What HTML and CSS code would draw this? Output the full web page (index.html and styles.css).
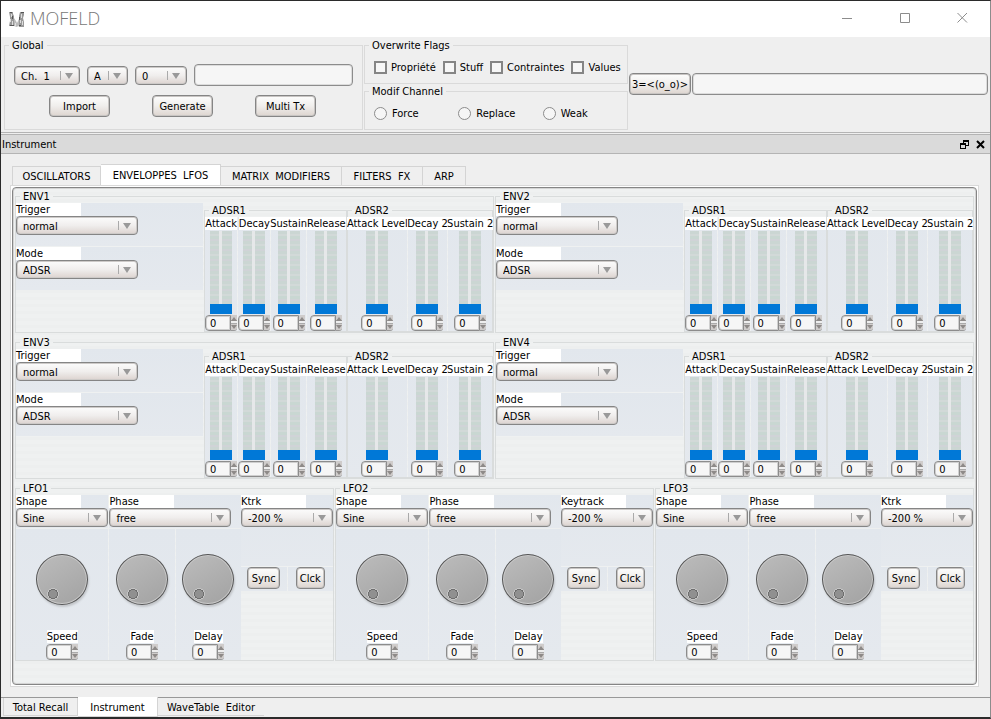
FILE: index.html
```html
<!DOCTYPE html>
<html lang="en">
<head>
<meta charset="utf-8">
<title>MOFELD</title>
<link rel="stylesheet" href="styles.css">
</head>
<body>
<header class="titlebar">
  <svg class="logo" viewBox="0 0 15 15" aria-hidden="true">
    <path d="M0 0h4v2l1 2v3l1 2v3l-1 2H0l1-5V5zM11 0h4v3l-1 3 1 4v5h-5l-1-3 1-4V4z" fill="#999"/>
    <path d="M5 6l2 3 1 2 2-4v6l-2 2-3-1z" fill="#bbb"/>
    <path d="M2.500 2v3M3.500 9v4M12.500 2v4M13.500 9v4M6.500 11v3M1.500 7v3M11.500 8v3" stroke="#dedede" fill="none"/>
    <path d="M1 13.500h4M10 13.500h2M3.500 4v3M10.500 5v3M1 .5h2M12 .5h3" stroke="#555" fill="none"/>
  </svg>
  <h1>MOFELD</h1>
  <div class="window-buttons">
    <button aria-label="Minimize"><svg viewBox="0 0 11 11"><path d="M0 6.500h10"/></svg></button>
    <button aria-label="Maximize"><svg viewBox="0 0 11 11"><path d="M.5 1.500h9v9h-9z"/></svg></button>
    <button aria-label="Close"><svg viewBox="0 0 11 11"><path d="M.5 1l9.500 9.500M10 1L.5 10.500"/></svg></button>
  </div>
</header>

<section class="toolbar">
  <fieldset class="group global">
    <legend>Global</legend>
    <div class="global-fields">
      <span class="combo channel"><select aria-label="Channel"><option>Ch.&nbsp; 1</option></select></span>
      <span class="combo bank"><select aria-label="Bank"><option>A</option></select></span>
      <span class="combo number"><select aria-label="Number"><option>0</option></select></span>
      <input class="field" type="text" aria-label="Name">
    </div>
    <div class="global-actions">
      <button class="btn">Import</button>
      <button class="btn">Generate</button>
      <button class="btn">Multi Tx</button>
    </div>
  </fieldset>
  <div class="options">
    <fieldset class="group">
      <legend>Overwrite Flags</legend>
      <div class="flags">
        <label><input type="checkbox">Propriété</label>
        <label><input type="checkbox">Stuff</label>
        <label><input type="checkbox">Contraintes</label>
        <label><input type="checkbox">Values</label>
      </div>
    </fieldset>
    <fieldset class="group">
      <legend>Modif Channel</legend>
      <div class="modes">
        <label><input type="radio" name="modif">Force</label>
        <label><input type="radio" name="modif">Replace</label>
        <label><input type="radio" name="modif">Weak</label>
      </div>
    </fieldset>
  </div>
  <div class="message">
    <button class="btn face">3=&lt;(o_o)&gt;</button>
    <input class="field" type="text" aria-label="Message">
  </div>
</section>

<div class="dock-title">
  <h2>Instrument</h2>
  <button aria-label="Float"><svg viewBox="0 0 9 9"><path d="M3 .5h6M3 1.500h6M3.500 0v3M8.500 0v6M6 5.500h3M0 4.500h6M.5 3v6M5.500 3v6M0 8.500h6M0 3.500h6"/></svg></button>
  <button aria-label="Close dock"><svg viewBox="0 0 9 9"><path class="heavy" d="M1 1l7 7M8 1l-7 7"/></svg></button>
</div>

<main>
  <nav class="tabs">
    <button class="tab-osc">OSCILLATORS</button>
    <button class="tab-env active">ENVELOPPES&nbsp; LFOS</button>
    <button class="tab-mod">MATRIX&nbsp; MODIFIERS</button>
    <button class="tab-fx">FILTERS&nbsp; FX</button>
    <button class="tab-arp">ARP</button>
  </nav>
  <div class="pane">
    <div class="pane-inner">
      <div class="envelopes" id="envelopes"></div>
      <div class="lfos" id="lfos"></div>
    </div>
  </div>
</main>

<nav class="bottom-tabs">
  <button class="tab-recall">Total Recall</button>
  <button class="tab-instrument active">Instrument</button>
  <button class="tab-wave">WaveTable&nbsp; Editor</button>
</nav>
<script src="panels.js"></script>
</body>
</html>
```
FILE: panels.js
```js
const combo = (id, label, value, size) => `
  <div class="labelled">
    <label for="${id}">${label}</label>
    <span class="combo ${size}"><select id="${id}"><option>${value}</option></select></span>
  </div>`;

const spin = (label) => `
  <span class="spin">
    <input type="number" value="0" aria-label="${label} value">
    <span class="steps"><button aria-label="Increase"></button><button aria-label="Decrease"></button></span>
  </span>`;

const fader = (id, label) => `
  <div class="fader cell">
    <label for="${id}">${label}</label>
    <input id="${id}" type="range" min="0" max="127" value="0">
    ${spin(label)}
  </div>`;

const faders = (prefix, title, names) => `
  <fieldset class="${title.toLowerCase()}">
    <legend>${title}</legend>
    <div class="faders">${names.map((n, i) => fader(`${prefix}-${title}-${i}`, n)).join("")}</div>
  </fieldset>`;

const envelope = (n) => `
  <fieldset>
    <legend>ENV${n}</legend>
    <div class="envelope">
      <div class="envelope-modes">
        <div class="cell">${combo(`trigger${n}`, "Trigger", "normal", "wide")}</div>
        <div class="cell">${combo(`mode${n}`, "Mode", "ADSR", "wide")}</div>
      </div>
      ${faders(`env${n}`, "ADSR1", ["Attack", "Decay", "Sustain", "Release"])}
      ${faders(`env${n}`, "ADSR2", ["Attack Level", "Decay 2", "Sustain 2"])}
    </div>
  </fieldset>`;

const knob = (id, label) => `
  <div class="knob cell">
    <input id="${id}" type="range" min="0" max="127" value="0">
    <label for="${id}">${label}</label>
    ${spin(label)}
  </div>`;

const lfo = (n, track) => `
  <fieldset>
    <legend>LFO${n}</legend>
    <div class="lfo">
      <div class="lfo-main">
        <div class="cell">${combo(`shape${n}`, "Shape", "Sine", "narrow")}</div>
        <div class="cell phase">${combo(`phase${n}`, "Phase", "free", "wide")}</div>
        ${knob(`speed${n}`, "Speed")}
        ${knob(`fade${n}`, "Fade")}
        ${knob(`delay${n}`, "Delay")}
      </div>
      <div class="lfo-side">
        <div class="cell track">${combo(`track${n}`, track, "-200 %", "narrow")}</div>
        <div class="cell"><button class="btn sync">Sync</button></div>
        <div class="cell"><button class="btn clock">Clck</button></div>
      </div>
    </div>
  </fieldset>`;

document.getElementById("envelopes").innerHTML = [1, 2, 3, 4].map(envelope).join("");
document.getElementById("lfos").innerHTML =
  ["Ktrk", "Keytrack", "Ktrk"].map((track, i) => lfo(i + 1, track)).join("");
```
FILE: styles.css
```css
* { box-sizing: border-box; }

body {
  margin: 0;
  min-height: 100vh;
  display: flex;
  flex-direction: column;
  border: 1px solid #2b2b2b;
  border-right-color: #8c8c8c;
  border-bottom-width: 2px;
  background: #efefef;
  color: #000;
  font: 11px/13px "DejaVu Sans Condensed", "DejaVu Sans", sans-serif;
  white-space: nowrap;
}

button, input, select { font: inherit; color: inherit; margin: 0; }
button { padding: 0; border: 0; background: none; }
h1, h2 { margin: 0; font-weight: normal; }
h2 { font-size: 11px; }

/* Title bar */
.titlebar {
  display: flex;
  align-items: center;
  height: 36px;
  padding-left: 8px;
  background: #fff;
}
.logo { width: 15px; height: 15px; }
h1 {
  flex: 1;
  padding: 0 0 2px 6px;
  font: 300 18px/24px "Open Sans", sans-serif;
  color: #777;
}
.window-buttons { display: flex; }
.window-buttons button { width: 58px; height: 30px; }
.window-buttons button:last-child { width: 56px; }
.window-buttons svg { width: 11px; height: 11px; stroke: #8c8c8c; fill: none; }

/* Shared controls */
fieldset {
  min-width: 0;
  margin: 0;
  padding: 0;
  border: 1px solid #d9dcdc;
}
legend { margin-left: 4px; padding: 2px 3px 0; line-height: 12px; }

.btn {
  height: 22px;
  padding-top: 1px;
  border: 1px solid #858585;
  border-radius: 4px;
  box-shadow: inset 0 0 0 1px #c8c5c3;
  background: linear-gradient(#fdfdfd, #f0eeec 50%, #ddd5cf);
  text-align: center;
}

.field {
  height: 22px;
  min-width: 0;
  border: 1px solid #8c8c8c;
  border-radius: 4px;
  box-shadow: inset 0 0 0 1px #dcdcdc;
  background: #f6f6f6;
}

.combo { position: relative; display: block; }
.combo select {
  display: block;
  width: 100%;
  height: 19px;
  padding: 2px 20px 0 6px;
  appearance: none;
  border: 1px solid #858585;
  border-radius: 4px;
  box-shadow: inset 0 0 0 1px #cdcac8;
  background: linear-gradient(#fcfcfc, #f0eeed 50%, #dcd3cf);
}
.combo::before {
  content: "";
  position: absolute;
  right: 19px;
  top: 5px;
  width: 1px;
  height: 9px;
  background: #aaa;
}
.combo::after {
  content: "";
  position: absolute;
  right: 7px;
  top: 7px;
  border: solid transparent;
  border-width: 6px 4px 0;
  border-top-color: #999;
}
.wide { width: 122px; }
.narrow { width: 92px; }

/* Toolbar */
.toolbar {
  display: grid;
  grid-template-columns: 359px 264px 1fr;
  gap: 1px;
  padding: 1px 2px 2px 3px;
  border-bottom: 1px solid #b4b4b4;
}
.group { border-color: #dadada; }
.global-fields {
  display: flex;
  align-items: center;
  gap: 7px;
  padding: 12px 9px 0;
}
.channel { width: 66px; }
.bank { width: 41px; }
.number { width: 52px; }
.global-fields .field { flex: 1; }
.global-actions {
  display: flex;
  justify-content: space-between;
  padding: 9px 46px 12px 44px;
}
.global-actions .btn { width: 61px; }

.options { display: flex; flex-direction: column; justify-content: space-between; }
.flags, .modes { display: flex; height: 31px; align-items: center; padding-left: 9px; }
.flags { gap: 7px; }
.flags label, .modes label { display: flex; align-items: center; gap: 4px; }
.modes label { flex: 1; gap: 5px; }
.flags input, .modes input {
  width: 13px;
  height: 13px;
  appearance: none;
  border: 2px solid #858585;
  background: #f6f6f6;
}
.modes input { border: 1px solid #8c8c8c; border-radius: 50%; }

.message { display: flex; align-items: center; gap: 1px; }
.face { width: 62px; overflow: hidden; }
.message .field { flex: 1; }

/* Dock title */
.dock-title {
  display: flex;
  align-items: center;
  gap: 7px;
  height: 20px;
  margin-top: 1px;
  padding: 0 5px 0 1px;
  border: solid #b4b4b4;
  border-width: 1px 0;
  background: #dadada;
}
.dock-title h2 { flex: 1; }
.dock-title button { width: 9px; height: 9px; }
.dock-title svg { display: block; width: 9px; height: 9px; stroke: #000; fill: none; }
.dock-title .heavy { stroke-width: 2; }

/* Tabs and pane */
main {
  flex: 1;
  display: flex;
  flex-direction: column;
  padding: 10px 11px 10px 9px;
}
.tabs { display: flex; align-items: flex-end; padding-left: 2px; }
.tabs button {
  height: 19px;
  padding-top: 1px;
  border: solid #d4d4d4;
  border-width: 1px 1px 0 0;
}
.tabs .tab-osc { width: 89px; border-left-width: 1px; }
.tabs .tab-env { width: 120px; }
.tabs .tab-mod { width: 121px; }
.tabs .tab-fx { width: 81px; }
.tabs .tab-arp { width: 43px; }
.tabs .active { height: 21px; background: #fff; }

.pane {
  flex: 1;
  display: flex;
  padding: 1px;
  border: 1px solid #d9d9d9;
  background: #fff;
}
.pane-inner {
  flex: 1;
  min-width: 0;
  padding: 0 2px;
  border: 1px solid #858585;
  border-radius: 4px;
  box-shadow: inset 0 0 0 1px #d4d4d4;
  background: repeating-linear-gradient(#eff1f1 0 4px, #edefef 4px 7px);
}
.envelopes {
  display: grid;
  grid-template-columns: repeat(2, minmax(0, 1fr));
  gap: 2px 1px;
  padding-top: 1px;
}
.lfos {
  display: grid;
  grid-template-columns: repeat(3, minmax(0, 1fr));
  gap: 1px;
  padding-top: 2px;
}
.cell { background: linear-gradient(#e2e7ed, #e5e9ee); }

.labelled label {
  display: block;
  width: 65px;
  height: 13px;
  padding-top: 1px;
  line-height: 12px;
  background: #fff;
}

/* Envelopes */
.envelope {
  display: grid;
  grid-template-columns: minmax(0, 188fr) minmax(0, 143fr) minmax(0, 146fr);
}
.envelope-modes { padding-right: 1px; }
.envelope-modes .cell { height: 43px; margin-bottom: 1px; }
.faders { display: grid; gap: 1px; }
.adsr1 .faders {
  grid-template-columns: minmax(0, 32fr) minmax(0, 32fr) minmax(0, 34fr) minmax(0, 39fr);
}
.adsr2 .faders {
  grid-template-columns: minmax(0, 59fr) minmax(0, 40fr) minmax(0, 44fr);
}
.fader { display: flex; flex-direction: column; align-items: center; }
.fader label { background: #fff; }
.fader input[type="range"] {
  width: 22px;
  height: 83px;
  margin: 1px 0;
  appearance: none;
  writing-mode: vertical-lr;
  direction: rtl;
  background:
    linear-gradient(90deg, transparent 9px, #e6e8e9 9px 12px, transparent 12px),
    repeating-linear-gradient(#cbd6d3 0 3px, #d2d9d8 3px 5px, #c9d7d2 5px 8px, #d0d3d7 8px 10px);
}
.fader input::-webkit-slider-thumb {
  appearance: none;
  width: 22px;
  height: 10px;
  background: #0078d7;
}

.spin { display: flex; width: 32px; height: 16px; }
.spin input {
  width: 26px;
  height: 16px;
  padding: 1px 0 0 4px;
  appearance: textfield;
  border: 1px solid #8c8c8c;
  border-radius: 4px 0 0 4px;
  box-shadow: inset 0 0 0 1px #cfcfcf;
  background: #f6f6f6;
}
.spin input::-webkit-inner-spin-button { display: none; }
.steps {
  display: flex;
  flex-direction: column;
  justify-content: space-between;
  align-items: center;
  width: 6px;
  padding: 2px 0 1px;
  border-bottom: 1px solid #999;
  border-radius: 0 0 3px 0;
  background: linear-gradient(transparent 5px, #aaa 5px 6px, #eee 6px 8px, #aaa 8px 9px, transparent 9px) #cfcccb;
}
.steps button {
  border: solid transparent;
  border-width: 0 3px 4px;
  border-bottom-color: #8e8a88;
}
.steps button:last-child { border-width: 4px 3px 0; border-top-color: #8e8a88; }

/* LFOs */
.lfo { display: grid; grid-template-columns: minmax(0, 225fr) minmax(0, 92fr); }
.lfo-main {
  display: grid;
  grid-template-columns: minmax(0, 92fr) minmax(0, 65fr) minmax(0, 65fr);
  grid-template-rows: 33px 131px;
  gap: 1px;
}
.phase { grid-column: span 2; }
.knob { display: flex; flex-direction: column; align-items: center; padding-top: 25px; }
.knob label { margin: 25px 0 1px; background: #fff; }
.knob > input {
  width: 52px;
  height: 52px;
  appearance: none;
  border: 1px solid #555;
  border-radius: 50%;
  box-shadow: inset 0 0 0 1px #c9c9c9, 1px 2px 2px #c3c6ca;
  background:
    radial-gradient(circle at 16px 39px, #909090 4px, #6e6e6e 4px 5px, #c4c4c4 5px 6px, transparent 6px),
    linear-gradient(150deg, #bcbcbc, #a2a2a2);
}
.knob > input::-webkit-slider-thumb { appearance: none; width: 1px; height: 1px; }
.lfo-side {
  display: grid;
  grid-template-columns: 1fr 1fr;
  grid-template-rows: 71px 24px;
  gap: 1px;
  align-content: start;
  text-align: center;
}
.lfo-side .labelled { text-align: left; }
.track { grid-column: span 2; }
.sync { width: 33px; }
.clock { width: 29px; }

/* Bottom tabs */
.bottom-tabs {
  display: flex;
  height: 20px;
  padding-left: 2px;
  border-top: 1px solid #999;
}
.bottom-tabs button {
  height: 18px;
  padding-top: 2px;
  border: solid #d4d4d4;
  border-width: 0 1px 1px 0;
}
.bottom-tabs .tab-recall { width: 75px; border-left-width: 1px; }
.bottom-tabs .tab-instrument { width: 80px; }
.bottom-tabs .tab-wave { width: 106px; border-right-width: 0; }
.bottom-tabs .active { height: 20px; margin-top: -1px; background: #fff; }
```
